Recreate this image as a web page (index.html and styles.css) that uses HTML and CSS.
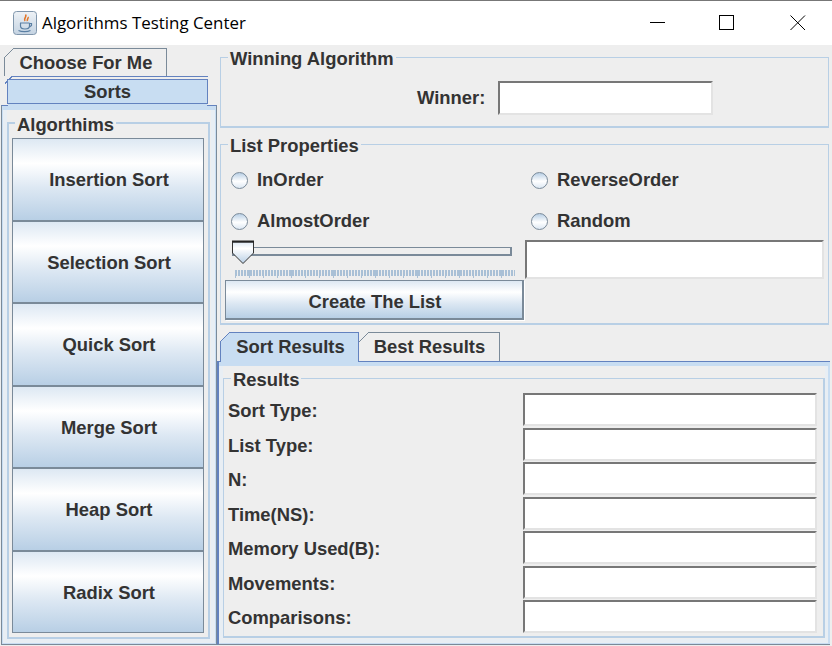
FILE: index.html
```html
<!DOCTYPE html>
<html lang="en">
<head>
<meta charset="utf-8">
<title>Algorithms Testing Center</title>
<link rel="stylesheet" href="styles.css">
</head>
<body>
<header class="titlebar">
  <span class="app-icon">
    <svg width="24" height="24" viewBox="0 0 24 24">
      <defs><linearGradient id="ig" x1="0" y1="0" x2="0" y2="1"><stop offset="0" stop-color="#eef2f6"/><stop offset="1" stop-color="#c4d3e2"/></linearGradient></defs>
      <rect x="0.500" y="0.500" width="23" height="23" rx="3" fill="url(#ig)" stroke="#8096ac"/>
      <path d="M12.500 3.500c2 2.500-2.500 3.500-.5 6.500M15 6c.8 1.500-1.500 2.500-.5 4" fill="none" stroke="#e2762a" stroke-width="1.600"/>
      <path d="M7 12h9.500M7.500 12v3c0 2 2 3 4.500 3s4.500-1 4.500-3v-3" fill="none" stroke="#5a7fa3" stroke-width="1.200"/>
      <path d="M16.500 12.500h2v2l-2 1.500M5.500 19.500c3 1.500 9 1.500 12 0" fill="none" stroke="#5a7fa3" stroke-width="1.200"/>
    </svg>
  </span>
  <span class="app-title">Algorithms Testing Center</span>
  <div class="win-controls">
    <svg class="win-btn" width="16" height="16" viewBox="0 0 16 16"><path d="M0 7.500h15" stroke="#000" fill="none"/></svg>
    <svg class="win-btn win-max" width="16" height="16" viewBox="0 0 16 16"><rect x="0.500" y="0.500" width="14" height="14" stroke="#000" fill="none"/></svg>
    <svg class="win-btn" width="16" height="16" viewBox="0 0 16 16"><path d="M0.500 0.500l14.500 14.500M15 0.500l-14.500 14.500" stroke="#000" fill="none"/></svg>
  </div>
</header>
<main class="main">
  <section class="left">
    <div class="tab tab-choose">Choose For Me</div>
    <div class="tab tab-sorts"><div class="sorts-face">Sorts</div></div>
    <div class="pane pane-left">
      <fieldset class="group group-algos">
        <legend>Algorthims</legend>
        <div class="algo-list">
          <button class="btn">Insertion Sort</button>
          <button class="btn">Selection Sort</button>
          <button class="btn">Quick Sort</button>
          <button class="btn">Merge Sort</button>
          <button class="btn">Heap Sort</button>
          <button class="btn">Radix Sort</button>
        </div>
      </fieldset>
    </div>
  </section>
  <section class="right">
    <fieldset class="group group-win">
      <legend>Winning Algorithm</legend>
      <div class="winner-row">
        <span class="label">Winner:</span>
        <div class="field field-winner"></div>
      </div>
    </fieldset>
    <fieldset class="group group-list">
      <legend>List Properties</legend>
      <div class="radios">
        <label class="radio"><span class="dot"></span>InOrder</label>
        <label class="radio"><span class="dot"></span>ReverseOrder</label>
        <label class="radio"><span class="dot"></span>AlmostOrder</label>
        <label class="radio"><span class="dot"></span>Random</label>
      </div>
      <div class="create-row">
        <div class="create-left">
          <div class="slider">
            <div class="track"></div>
            <svg class="thumb" width="24" height="25" viewBox="0 0 24 25">
              <defs><linearGradient id="tg" x1="0" y1="0" x2="0" y2="1"><stop offset="0" stop-color="#dde8f3"/><stop offset=".3" stop-color="#fff"/><stop offset="1" stop-color="#b8cfe5"/></linearGradient></defs>
              <path d="M1.500 2h21v11l-10.500 10.500-10.500-10.500z" fill="url(#tg)" stroke="#333"/>
              <path d="M1 1.500h22" stroke="#222" stroke-width="2" fill="none"/>
            </svg>
          </div>
          <div class="ticks"></div>
          <button class="btn btn-create">Create The List</button>
        </div>
        <div class="field field-size"></div>
      </div>
    </fieldset>
    <div class="result-tabs">
      <div class="tab tab-sort">Sort Results</div>
      <div class="tab tab-best">Best Results</div>
    </div>
    <div class="pane pane-right">
      <fieldset class="group group-results">
        <legend>Results</legend>
        <div class="results">
          <span class="label">Sort Type:</span><div class="field"></div>
          <span class="label">List Type:</span><div class="field"></div>
          <span class="label">N:</span><div class="field"></div>
          <span class="label">Time(NS):</span><div class="field"></div>
          <span class="label">Memory Used(B):</span><div class="field"></div>
          <span class="label">Movements:</span><div class="field"></div>
          <span class="label">Comparisons:</span><div class="field"></div>
        </div>
      </fieldset>
    </div>
  </section>
</main>
</body>
</html>
```
FILE: styles.css
```css
* { box-sizing: border-box; }
html, body { margin: 0; height: 646px; overflow: hidden; }
body {
  background: #eeeeee;
  color: #333333;
  font: bold 18.400px/20px "Liberation Sans", Arial, sans-serif;
}
.titlebar {
  height: 45px;
  background: #fff;
  border-top: 1px solid #777;
  display: flex;
  align-items: center;
  padding-left: 13px;
}
.app-icon { width: 24px; height: 24px; display: flex; }
.app-title {
  margin-left: 5px;
  font: 400 16.900px/24px "Open Sans", sans-serif;
  color: #000;
}
.win-controls {
  margin-left: auto;
  display: flex;
  gap: 54px;
  padding-right: 26px;
}
.win-max { position: relative; left: -1px; }
.main { display: flex; height: 601px; }
.left { width: 217px; flex: none; }
.right { width: 615px; flex: none; padding: 3px 0 0 3px; }

.tab { text-align: center; position: relative; }
.tab-choose {
  --line: #7a8a99;
  margin: 3px 0 0 4px;
  width: 163px;
  height: 28px;
  padding: 5px 0 0 1px;
  background:
    linear-gradient(var(--line), var(--line)) 10px 0 / 100% 1px no-repeat,
    linear-gradient(var(--line), var(--line)) 0 10px / 1px 100% no-repeat,
    linear-gradient(var(--line), var(--line)) 100% 0 / 1px 100% no-repeat,
    linear-gradient(135deg, transparent 6.400px, var(--line) 6.400px 7.500px, transparent 7.500px) 0 0 / 12px 12px no-repeat;
}
.tab-sorts {
  margin-left: 5px;
  width: 203px;
  height: 28px;
  padding: 3px 0 0 2px;
  z-index: 1;
  background:
    linear-gradient(#6382bf, #6382bf) 7px 0 / 100% 1px no-repeat,
    linear-gradient(135deg, transparent 4.500px, #6382bf 4.500px 5.800px, transparent 5.800px) 0 0 / 8px 8px no-repeat;
}
.sorts-face {
  height: 25px;
  padding-top: 2px;
  background: #c8ddf2;
  border: 1px solid #6382bf;
}
.tab-sorts::after {
  content: "";
  position: absolute;
  left: 3px;
  right: 1px;
  bottom: -2px;
  height: 2px;
  background: #c8ddf2;
}
.pane { background: #eeeeee; }
.pane-left {
  margin: 1px 0 0 1px;
  width: 216px;
  height: 540px;
  border: 1px solid #7a8a99;
  border-top-color: #6382bf;
  padding-top: 8px;
  box-shadow:
    inset 0 4px 0 #c8ddf2,
    inset 1px 0 0 #c8ddf2,
    inset -1px 0 0 #c8ddf2,
    inset 0 -1px 0 #c8ddf2,
    inset 0 -5px 0 #e8eef4,
    inset 5px 0 0 #e8eef4,
    inset -5px 0 0 #e8eef4;
}
.group {
  margin: 0;
  padding: 0;
  min-width: 0;
  border: 1px solid #b8cfe5;
  border-bottom-width: 2px;
}
.group legend {
  margin-left: 7px;
  padding: 0 2px;
  height: 18px;
  line-height: 22px;
}
.group-algos {
  margin-left: 5px;
  width: 203px;
  height: 525px;
  padding: 6px 4px 0 3px;
  border-width: 2px;
}
.group-algos legend { margin-left: 3px; }
.algo-list { display: flex; flex-direction: column; }
.btn {
  font: inherit;
  color: #333333;
  border: 1px solid #7a8a99;
  padding: 0;
  background: linear-gradient(#dde8f3 0, #fff 30%, #dde8f3 60%, #b8cfe5 100%);
}
.algo-list .btn { height: 82.500px; flex: none; padding: 2px 0 0 2px; }

.group-win { width: 609px; height: 80px; }
.winner-row {
  display: flex;
  align-items: center;
  padding: 15px 0 0 196px;
}
.field {
  background: #fff;
  border: 2px solid #e3e3e3;
  border-top-color: #777;
  border-left-color: #777;
}
.field-winner { width: 215px; height: 34px; margin-left: 13px; }
.group-list { margin-top: 7px; width: 609px; height: 190px; }
.radios {
  display: grid;
  grid-template-columns: 300px 1fr;
  grid-auto-rows: 41px;
  padding: 12px 0 0 10px;
}
.radio { display: flex; align-items: center; height: 20px; margin-top: 5px; }
.dot {
  width: 17px;
  height: 17px;
  border-radius: 50%;
  border: 1px solid #7a8a99;
  background: linear-gradient(#b8cfe5, #fff 55%, #dde8f3);
  margin-right: 9px;
}
.create-row { display: flex; margin-top: -7px; }
.create-left { width: 299px; margin-left: 4px; }
.slider { position: relative; height: 27px; }
.track {
  position: absolute;
  left: 7px;
  top: 7px;
  width: 280px;
  height: 9px;
  border: 1px solid #7a8a99;
  border-width: 1px 2px 2px 1px;
}
.thumb { position: absolute; left: 6px; top: 0; }
.ticks {
  height: 8px;
  margin: 3px 0 2px 10px;
  width: 280px;
  background:
    repeating-linear-gradient(90deg, #a9c0d6 0 1px, transparent 1px 14px) 0 0 / 100% 8px no-repeat,
    repeating-linear-gradient(90deg, #a9c0d6 0 2px, transparent 2px 3px) 0 0 / 100% 6px no-repeat;
}
.btn-create {
  width: 299px;
  height: 40px;
  display: block;
  padding: 4px 0 0 2px;
  border-width: 1px 2px 2px 1px;
  box-shadow: 1px 1px 0 #fff;
}
.field-size { width: 299px; height: 39px; margin-left: 1px; }

.result-tabs { display: flex; margin-top: 7px; height: 29px; }
.tab-sort {
  --line: #6382bf;
  width: 139px;
  height: 29px;
  padding: 5px 0 0 2px;
  z-index: 1;
  background:
    linear-gradient(var(--line), var(--line)) 10px 0 / 100% 1px no-repeat,
    linear-gradient(var(--line), var(--line)) 0 10px / 1px 100% no-repeat,
    linear-gradient(var(--line), var(--line)) 100% 0 / 1px 100% no-repeat,
    linear-gradient(135deg, transparent 6.400px, var(--line) 6.400px 7.500px, #c8ddf2 7.500px);
}
.tab-sort::after {
  content: "";
  position: absolute;
  left: 1px;
  right: 1px;
  bottom: -1px;
  height: 1px;
  background: #c8ddf2;
}
.tab-best {
  --line: #7a8a99;
  width: 141px;
  height: 29px;
  padding-top: 5px;
  background:
    linear-gradient(var(--line), var(--line)) 10px 0 / 100% 1px no-repeat,
    linear-gradient(var(--line), var(--line)) 100% 0 / 1px 100% no-repeat,
    linear-gradient(135deg, transparent 6.400px, var(--line) 6.400px 7.500px, transparent 7.500px) 0 0 / 12px 12px no-repeat;
}
.pane-right {
  margin-left: -3px;
  width: 613px;
  height: 284px;
  border-style: solid;
  border-width: 1px 0 1px 2px;
  border-color: #6382bf #6382bf #7a8a99;
  padding-top: 7px;
  box-shadow:
    inset 0 4px 0 #c8ddf2,
    inset -2px 0 0 #c8ddf2,
    inset 0 -1px 0 #c8ddf2,
    inset 0 -5px 0 #e8eef4,
    inset 4px 0 0 #e8eef4,
    inset -5px 0 0 #e8eef4;
}
.group-results {
  margin-left: 4px;
  width: 602px;
  height: 269px;
  padding: 0;
  border-width: 1px 2px 2px 1px;
}
.results {
  display: grid;
  grid-template-columns: 295px 294px;
  grid-auto-rows: 34.500px;
  padding: 6px 0 0 4px;
  align-items: start;
}
.results .label { padding-top: 8px; }
.results .field { height: 33px; }
```
